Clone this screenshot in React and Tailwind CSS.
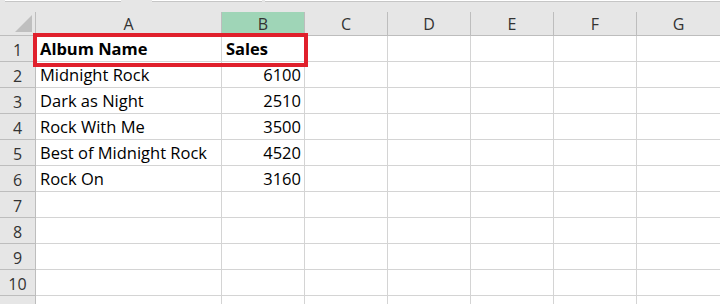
import React from 'react';

const cols = ['A', 'B', 'C', 'D', 'E', 'F', 'G'];

const rows = [
  ['Album Name', 'Sales'],
  ['Midnight Rock', '6100'],
  ['Dark as Night', '2510'],
  ['Rock With Me', '3500'],
  ['Best of Midnight Rock', '4520'],
  ['Rock On', '3160'],
  ['', ''],
  ['', ''],
  ['', ''],
  ['', ''],
  ['', ''],
];

const App = () => {
  return (
    <div className="w-[720px] h-[304px] overflow-hidden bg-[#e6e6e6] font-['Open_Sans',sans-serif]">
      {/* formula bar remains */}
      <div className="h-[12px] flex items-start">
        <div className="ml-[5px] w-[116px] h-[2px] bg-white border-b border-[#c6c6c6]" />
        <div className="ml-[31px] w-[110px] h-[2px] bg-white border-b border-[#c6c6c6]" />
        <div className="ml-[3px] flex-1 h-[2px] bg-white border-b border-[#c6c6c6]" />
      </div>

      <div className="relative">
        <div className="grid grid-cols-[36px_186px_83px_83px_83px_83px_83px_84px]">
          {/* header row */}
          <div className="relative h-[24px] bg-[#e6e6e6] border-r border-b border-[#bdbdbd]">
            <div className="absolute right-[3px] bottom-[3px] w-0 h-0 border-l-[17px] border-l-transparent border-b-[17px] border-b-[#bfbfbf]" />
          </div>
          {cols.map((c) => (
            <div
              key={c}
              className={`h-[24px] flex items-center justify-center pt-[1px] text-[16px] text-[#333] border-r border-b border-[#bdbdbd] ${
                c === 'B' ? 'bg-[#9fd5b7]' : 'bg-[#e6e6e6]'
              }`}
            >
              {c}
            </div>
          ))}

          {rows.map((r, i) => (
            <React.Fragment key={i}>
              <div className="h-[26px] flex items-center justify-center pt-[2px] text-[16px] text-[#333] bg-[#e6e6e6] border-r border-b border-[#bdbdbd]">
                {i < 10 ? i + 1 : ''}
              </div>
              <div
                className={`h-[26px] flex items-center pt-[2px] pl-[4px] text-[16.5px] text-black bg-white border-r border-b border-[#d4d4d4] whitespace-nowrap ${
                  i === 0 ? 'font-bold' : ''
                }`}
              >
                {r[0]}
              </div>
              <div
                className={`h-[26px] flex items-center pt-[2px] text-[16.5px] text-black bg-white border-r border-b border-[#d4d4d4] ${
                  i === 0 ? 'font-bold pl-[4px]' : 'justify-end pr-[3px]'
                }`}
              >
                {r[1]}
              </div>
              {cols.slice(2).map((c) => (
                <div key={c} className="h-[26px] bg-white border-r border-b border-[#d4d4d4]" />
              ))}
            </React.Fragment>
          ))}
        </div>

        {/* highlight around header row */}
        <div className="absolute left-[33px] top-[21px] w-[275px] h-[34px] border-4 border-[#e0202c]" />
      </div>
    </div>
  );
};

export default App;
